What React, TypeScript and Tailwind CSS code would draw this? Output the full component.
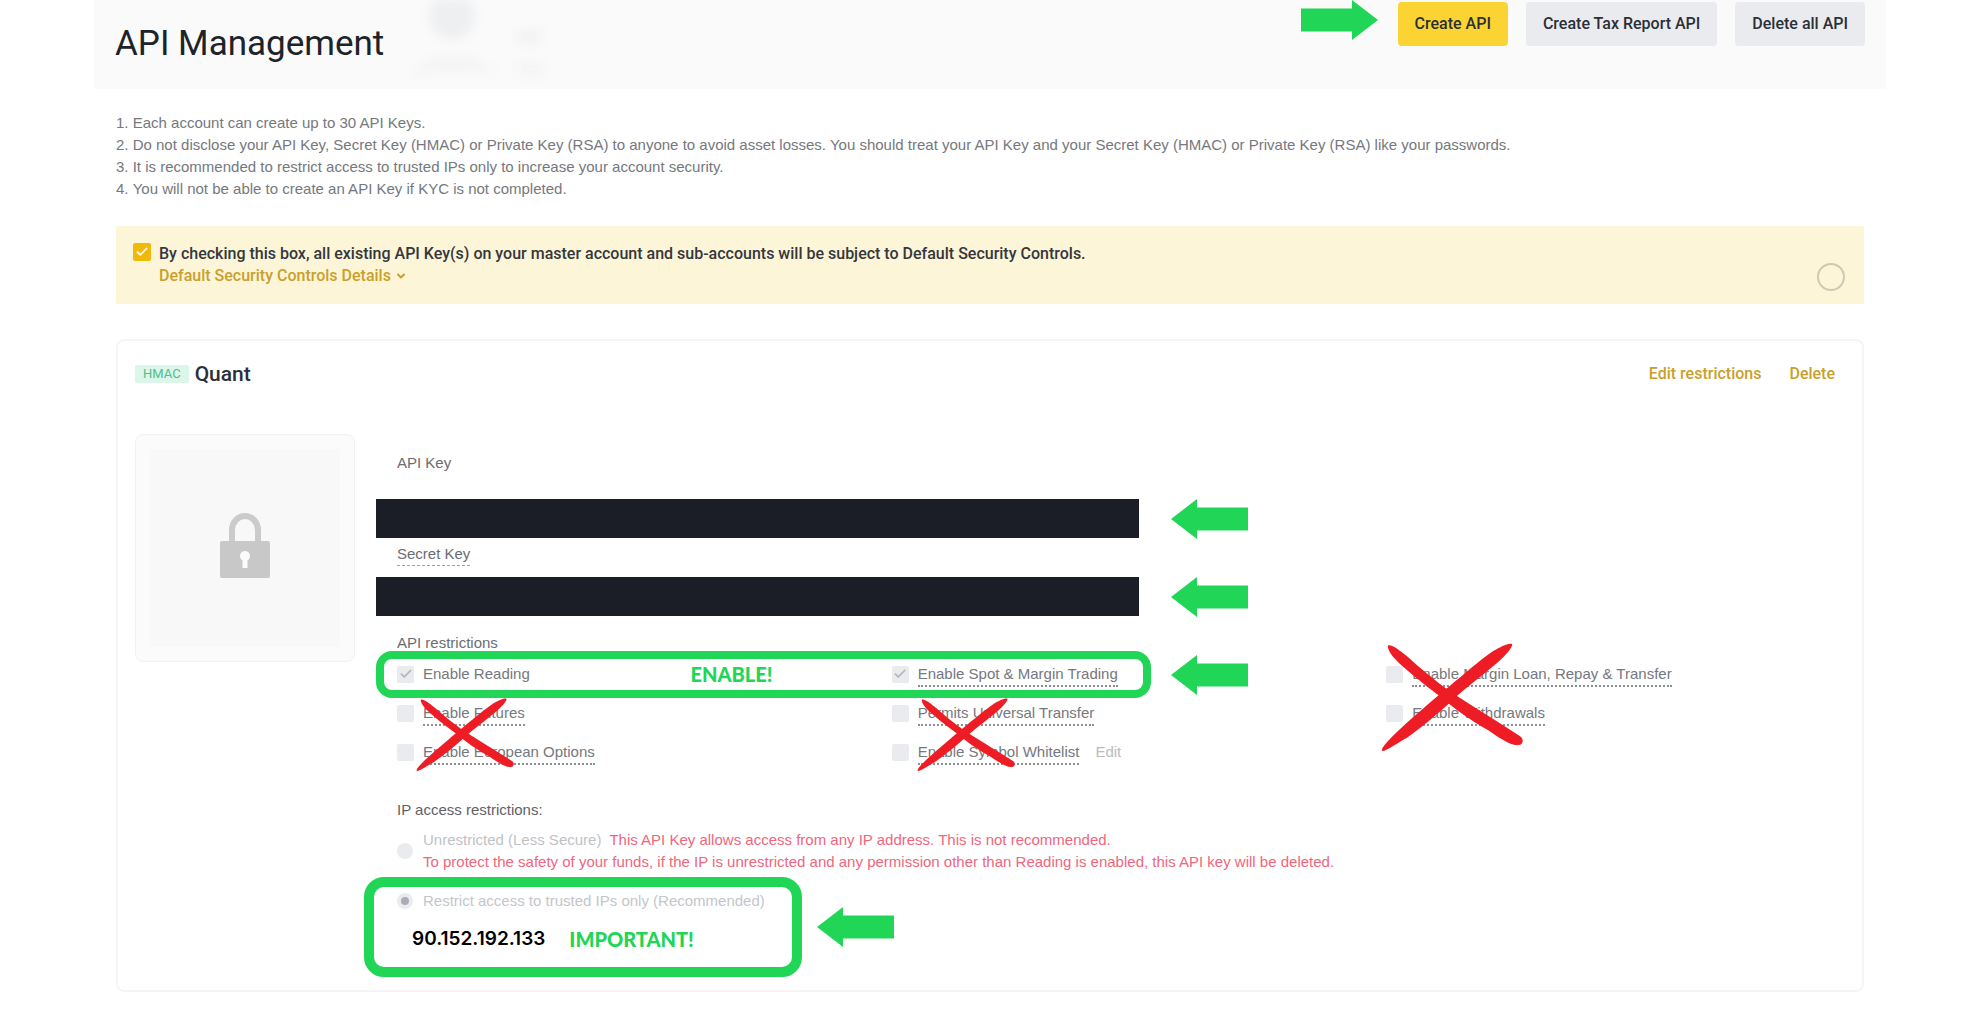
import type { ReactNode } from 'react';
import { Check, ChevronDown } from 'lucide-react';
import { clsx } from 'clsx';

const NOTES = [
  'Each account can create up to 30 API Keys.',
  'Do not disclose your API Key, Secret Key (HMAC) or Private Key (RSA) to anyone to avoid asset losses. You should treat your API Key and your Secret Key (HMAC) or Private Key (RSA) like your passwords.',
  'It is recommended to restrict access to trusted IPs only to increase your account security.',
  'You will not be able to create an API Key if KYC is not completed.',
];

interface Permission {
  id: string;
  label: string;
  checked?: boolean;
  plain?: boolean;
  editable?: boolean;
}

// Row by row, three columns
const PERMISSIONS: (Permission | null)[] = [
  { id: 'reading', label: 'Enable Reading', checked: true, plain: true },
  { id: 'spot', label: 'Enable Spot & Margin Trading', checked: true },
  { id: 'loan', label: 'Enable Margin Loan, Repay & Transfer' },
  { id: 'futures', label: 'Enable Futures' },
  { id: 'universal', label: 'Permits Universal Transfer' },
  { id: 'withdrawals', label: 'Enable Withdrawals' },
  { id: 'options', label: 'Enable European Options' },
  { id: 'whitelist', label: 'Enable Symbol Whitelist', editable: true },
  null,
];

function Arrow({ direction = 'left', className }: { direction?: 'left' | 'right'; className?: string }) {
  return (
    <svg viewBox="0 0 77 40" aria-hidden="true" className={clsx('h-10 w-[77px] shrink-0 fill-[#21d656]', className)}>
      {direction === 'left' ? (
        <path d="M0 20 26 0V8.500H77V31.500H26V40Z" />
      ) : (
        <path d="M77 20 51 0V8.500H0V31.500H51V40Z" />
      )}
    </svg>
  );
}

function Cross({ className }: { className?: string }) {
  return (
    <svg
      viewBox="0 0 98 73"
      preserveAspectRatio="none"
      aria-hidden="true"
      className={clsx('pointer-events-none absolute fill-[#ee1c24]', className)}
    >
      <path d="M5 1.500C8 1 13 5 18 9C28 18 38 26 48 33C62 42 82 54 96 63C99 65 98 69 95 69C90 70 80 63 74 59C60 51 50 44 42 37C31 29 14 16 8 9C6 6 4 3 5 1.500Z" />
      <path d="M90 .5C92 1 88 6 85 9C77 17 60 29 50 38C38 49 28 57 18 64C12 67 4 73 1 73C-1 72 5 66 9 62C20 52 34 40 45 31C56 22 70 10 78 5C82 3 87 0 90 .5Z" />
    </svg>
  );
}

function Checkbox({ id, checked = false }: { id: string; checked?: boolean }) {
  return (
    <span className="grid shrink-0 place-items-center">
      <input
        id={id}
        type="checkbox"
        defaultChecked={checked}
        disabled
        className="size-[17px] appearance-none rounded-xs bg-[#eaebef] [grid-area:1/1]"
      />
      {checked && <Check className="pointer-events-none size-3.5 text-[#b3b6bc] [grid-area:1/1]" strokeWidth={3} />}
    </span>
  );
}

function PermissionItem({ permission }: { permission: Permission }) {
  return (
    <div className="flex items-start">
      <div className="flex h-[22px] items-center">
        <Checkbox id={permission.id} checked={permission.checked} />
      </div>
      <label
        htmlFor={permission.id}
        className={clsx('ml-[9px] whitespace-nowrap', !permission.plain && 'border-b-2 border-dotted border-[#8b8e95]')}
      >
        {permission.label}
      </label>
      {permission.editable && (
        <button type="button" disabled className="ml-4 text-[#b9bcc2]">
          Edit
        </button>
      )}
    </div>
  );
}

function HeaderButton({ primary, children }: { primary?: boolean; children: ReactNode }) {
  return (
    <button
      type="button"
      className={clsx(
        'h-11 rounded px-[17px] font-[Roboto] text-[16px] font-medium text-[#2b2f36]',
        primary ? 'bg-[#fbd433]' : 'bg-[#eaebef]'
      )}
    >
      {children}
    </button>
  );
}

function PageHeader() {
  return (
    <header className="relative flex items-start justify-between overflow-hidden bg-[#fafafa] px-[21px] pt-0.5 pb-[43px]">
      <h1 className="mt-[22px] h-[22px] font-[Roboto] text-[35px] leading-[40px] text-[#1e2329]">API Management</h1>
      <svg viewBox="0 0 150 89" aria-hidden="true" className="absolute top-0 left-[310px] h-[89px] w-[150px] blur-[5px]">
        <ellipse cx="48" cy="16" rx="23" ry="23" fill="#eeeff1" />
        <path d="M10 80C12 62 28 57 48 57S86 62 90 80V66L84 72H16Z" fill="#f4f4f5" />
        <rect x="113" y="30" width="24" height="14" fill="#f3f3f4" />
        <rect x="113" y="62" width="26" height="14" fill="#f5f5f6" />
      </svg>
      <div className="flex gap-[18px]">
        <Arrow direction="right" className="-mt-0.5 mr-0.5" />
        <HeaderButton primary>Create API</HeaderButton>
        <HeaderButton>Create Tax Report API</HeaderButton>
        <HeaderButton>Delete all API</HeaderButton>
      </div>
    </header>
  );
}

function SecurityBanner() {
  return (
    <section className="mt-[26px] flex items-end justify-between rounded-xs bg-[#fdf5d8] p-[17px]">
      <div className="flex items-start gap-2 font-[Roboto] text-[16px] font-medium">
        <span className="grid place-items-center">
          <input
            id="default-controls"
            type="checkbox"
            defaultChecked
            className="size-[18px] appearance-none rounded-xs bg-[#f0b90b] [grid-area:1/1]"
          />
          <Check className="pointer-events-none size-3.5 text-white [grid-area:1/1]" strokeWidth={3} />
        </span>
        <div>
          <label htmlFor="default-controls" className="block text-[#34373c]">
            By checking this box, all existing API Key(s) on your master account and sub-accounts will be subject to
            Default Security Controls.
          </label>
          <button type="button" className="flex items-center gap-1 text-[#c9a02c]">
            Default Security Controls Details
            <ChevronDown className="size-3" strokeWidth={4} />
          </button>
        </div>
      </div>
      <span className="-mb-1 mr-0.5 size-7 shrink-0 rounded-full border-2 border-[#cfc9b4]" />
    </section>
  );
}

function LockPanel() {
  return (
    <div className="h-[228px] w-[220px] shrink-0 rounded-lg border border-[#f1f1f1] bg-[#fbfbfb] p-3.5">
      <div className="grid h-full place-items-center bg-[#f8f8f8] pb-1.5">
        <svg viewBox="0 0 50 65" aria-hidden="true" className="h-[65px] w-[50px]">
          <path d="M12 30V17A13 14 0 0 1 38 17V30" fill="none" stroke="#cbcbcb" strokeWidth="6" />
          <rect y="28" width="50" height="37" rx="2" fill="#c8c8c8" />
          <path d="M25 38A5 5 0 0 1 27.500 47.300V55H22.500V47.300A5 5 0 0 1 25 38Z" fill="#fbfbfb" />
        </svg>
      </div>
    </div>
  );
}

function HiddenValue({ className }: { className?: string }) {
  return (
    <div className={clsx('flex items-center gap-8', className)}>
      <div className="h-[39px] w-[763px] bg-[#1b1e26]" />
      <Arrow className="-my-px" />
    </div>
  );
}

function Permissions() {
  return (
    <div className="relative mt-[9px] ml-[21px] grid grid-cols-3 gap-x-9 gap-y-[15px] text-[#75787e]">
      {PERMISSIONS.map((permission) =>
        permission ? <PermissionItem key={permission.id} permission={permission} /> : null
      )}

      {/* Highlighted permissions */}
      <div className="pointer-events-none absolute -top-[12px] -left-[21px] flex items-center">
        <div className="flex h-[47px] w-[775px] items-center justify-center rounded-2xl border-8 border-[#21d656] pb-0.5 font-[Lato] text-[20px] font-black text-[#21d656]">
          <span className="mr-[64px]">ENABLE!</span>
        </div>
        <Arrow className="ml-5" />
      </div>

      {/* Permissions that stay off */}
      <Cross className="top-[35px] left-[19px] h-[73px] w-[98px]" />
      <Cross className="top-[35px] left-[520px] h-[73px] w-[98px]" />
      <Cross className="-top-[20px] left-[984px] h-[108px] w-[142px]" />
    </div>
  );
}

function IpRestrictions() {
  const radio =
    'size-4 shrink-0 appearance-none rounded-full bg-[#eaebef] checked:border-4 checked:border-[#eaebef] checked:bg-[#a9adb4]';

  return (
    <fieldset className="mt-[34px] ml-[21px]">
      <legend className="text-[#5f6267]">IP access restrictions:</legend>
      <div className="mt-2 flex items-center gap-2.5">
        <input id="ip-any" type="radio" name="ip" disabled className={radio} />
        <label htmlFor="ip-any" className="text-[#f0667c]">
          <span className="mr-2 text-[#bfc2c7]">Unrestricted (Less Secure)</span>
          This API Key allows access from any IP address. This is not recommended.
          <br />
          To protect the safety of your funds, if the IP is unrestricted and any permission other than Reading is
          enabled, this API key will be deleted.
        </label>
      </div>
      <div className="relative mt-[17px]">
        <div className="flex items-center gap-2.5">
          <input id="ip-trusted" type="radio" name="ip" defaultChecked disabled className={radio} />
          <label htmlFor="ip-trusted" className="text-[#c3c6cb]">
            Restrict access to trusted IPs only (Recommended)
          </label>
        </div>
        <div className="mt-[15px] ml-[15px] flex items-center gap-6">
          <span className="font-[Inter] text-[19px] leading-6 font-semibold text-black">90.152.192.133</span>
          <strong className="font-[Lato] text-[20px] leading-6 font-black text-[#21d656]">IMPORTANT!</strong>
        </div>
        <div className="pointer-events-none absolute -top-[13px] -left-[33px] flex items-center">
          <div className="h-[100px] w-[438px] rounded-[20px] border-10 border-[#21d656]" />
          <Arrow className="ml-[15px]" />
        </div>
      </div>
    </fieldset>
  );
}

function ApiKeyCard() {
  return (
    <section className="mt-[35px] rounded-lg border-2 border-[#f5f5f5] px-[17px] pt-[21px] pb-[39px]">
      <div className="flex h-6 items-center font-[Roboto] text-[16px] font-medium">
        <span className="rounded-xs bg-[#dcf6ea] px-2 text-[13px] leading-[18px] font-normal text-[#4fbf8b]">HMAC</span>
        <h2 className="ml-1.5 text-[21px] text-[#2b2f36]">Quant</h2>
        <div className="mr-2.5 ml-auto flex gap-7 text-[#c9a02c]">
          <button type="button">Edit restrictions</button>
          <button type="button">Delete</button>
        </div>
      </div>

      <div className="mt-12 flex items-start gap-[21px]">
        <LockPanel />
        <div className="min-w-0 flex-1 pt-[18px]">
          <div className="ml-[21px] text-[#6a6d72]">API Key</div>
          <HiddenValue className="mt-[25px]" />
          <div className="mt-[5px] ml-[21px] flex">
            <span className="border-b border-dashed border-[#a0a2a7] text-[#6a6d72]">Secret Key</span>
          </div>
          <HiddenValue className="mt-[11px]" />
          <div className="mt-4 ml-[21px] text-[#6a6d72]">API restrictions</div>
          <Permissions />
          <IpRestrictions />
        </div>
      </div>
    </section>
  );
}

export default function App() {
  return (
    <div className="min-h-screen bg-white px-[94px] pb-9 font-['Liberation_Sans',sans-serif] text-[15px] leading-[22px]">
      <PageHeader />
      <main className="px-[22px] pt-[23px]">
        <ol className="list-inside list-decimal text-[#75787e]">
          {NOTES.map((note) => (
            <li key={note}>{note}</li>
          ))}
        </ol>
        <SecurityBanner />
        <ApiKeyCard />
      </main>
    </div>
  );
}
